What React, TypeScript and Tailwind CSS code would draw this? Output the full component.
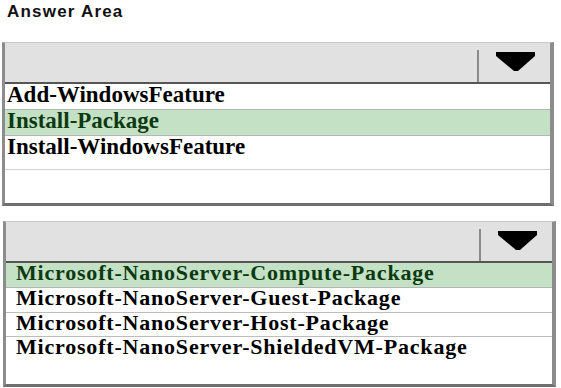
const serif = "font-['Times_New_Roman','Liberation_Serif',serif] font-bold";

function Arrow() {
  return (
    <svg width="40" height="20" viewBox="0 0 40 20">
      <path d="M0 0 H39 V4 L22 19 H18 L0 4 Z" fill="#000" />
    </svg>
  );
}

function Header() {
  return (
    <div className="flex h-[39px] items-end justify-end bg-[#e1e1e1]">
      <div className="h-[32px] w-[2px] bg-[#8a8a8a]" />
      <div className="flex h-full w-[71px] items-center justify-center pb-[2px] pl-[2px]">
        <Arrow />
      </div>
    </div>
  );
}

export default function App() {
  return (
    <div className="h-[388px] w-[561px] overflow-hidden bg-white">
      <div className="pl-[7px] pt-[2px] font-['Liberation_Sans',Arial,sans-serif] text-[17px] font-bold leading-[20px] tracking-[1.2px] text-[#111]">
        Answer Area
      </div>

      {/* first drop-down */}
      <div className="ml-[2px] mt-[20px] w-[552px] border-b-[3px] border-l-[3px] border-r-[4px] border-t border-b-[#6e6e6e] border-l-[#8c8c8c] border-r-[#8c8c8c] border-t-[#c8c8c8]">
        <Header />
        <div className={`border-t-2 border-[#555] text-[23px] leading-[22px] text-black ${serif}`}>
          <div className="h-[25px] pl-[2px]">Add-WindowsFeature</div>
          <div className="h-[27px] border-y border-[#b5b5b5] bg-[#c5e1c5] pl-[2px] text-[#0b3a12]">Install-Package</div>
          <div className="h-[34px] border-b border-[#cfcfcf] pl-[2px]">Install-WindowsFeature</div>
          <div className="h-[33px]" />
        </div>
      </div>

      {/* second drop-down */}
      <div className="ml-[3px] mt-[15px] w-[553px] border-b-[3px] border-l-[3px] border-r-[4px] border-t border-b-[#6e6e6e] border-l-[#8c8c8c] border-r-[#8c8c8c] border-t-[#c8c8c8]">
        <Header />
        <div className={`border-t-2 border-[#555] text-[22px] leading-[20px] tracking-[0.8px] text-black ${serif}`}>
          <div className="h-[25px] border-b border-[#b5b5b5] bg-[#c5e1c5] pl-[10px] text-[#0b3a12]">Microsoft-NanoServer-Compute-Package</div>
          <div className="h-[25px] border-b border-[#bdbdbd] pl-[10px]">Microsoft-NanoServer-Guest-Package</div>
          <div className="h-[24px] border-b border-[#bdbdbd] pl-[10px]">Microsoft-NanoServer-Host-Package</div>
          <div className="h-[47px] pl-[10px]">Microsoft-NanoServer-ShieldedVM-Package</div>
        </div>
      </div>
    </div>
  );
}
